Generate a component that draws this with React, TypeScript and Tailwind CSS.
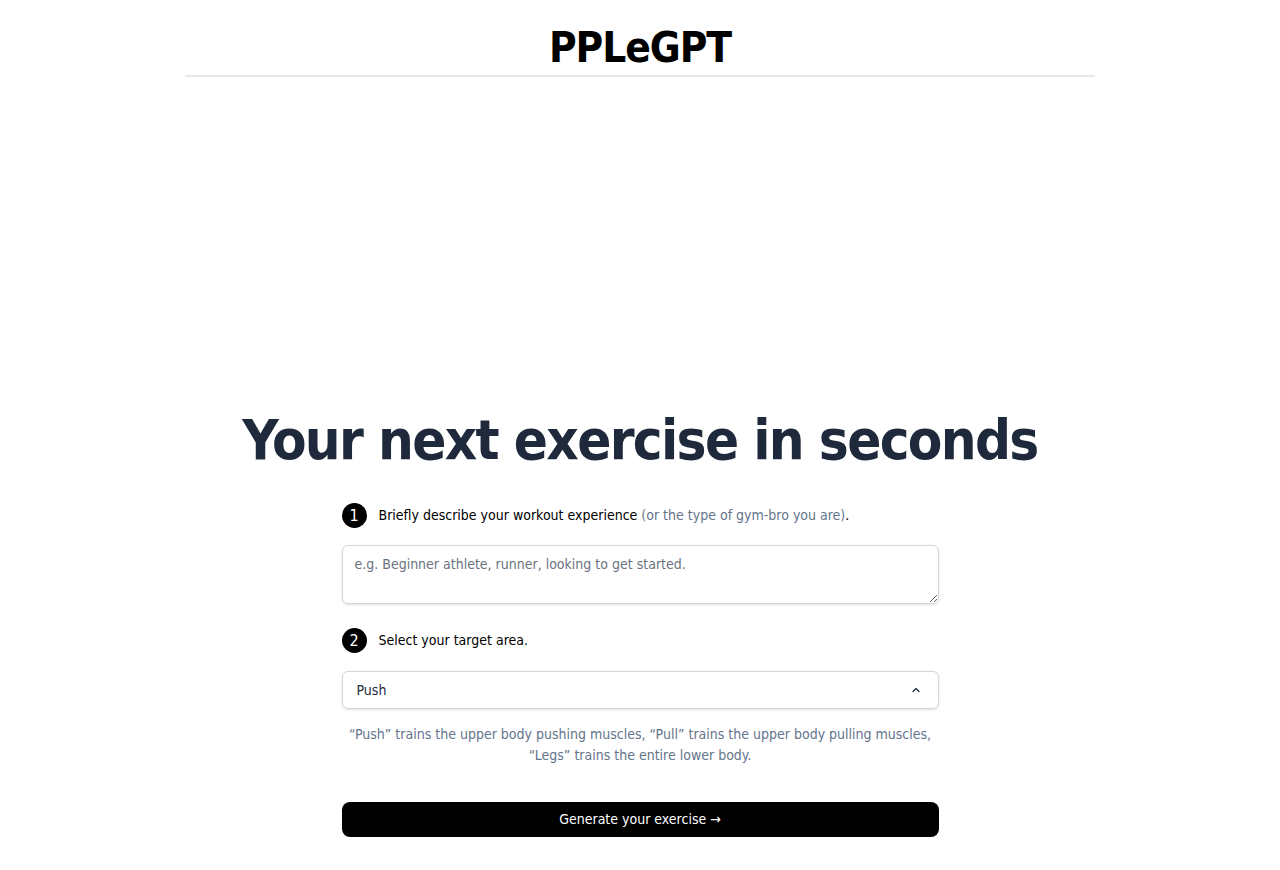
import React from "react";

export default function App() {
  const font = { fontFamily: '"DejaVu Sans Condensed", "DejaVu Sans", sans-serif' };
  return (
    <div className="min-h-screen bg-white" style={font}>
      <header className="mx-auto w-[910px] border-b-2 border-gray-200 pt-[24px] pb-[3px] flex justify-center">
        <h1 className="text-[42px] leading-[48px] font-bold text-black tracking-tight">PPLeGPT</h1>
      </header>
      <main className="flex flex-col items-center">
        <h2 className="mt-[331px] text-[56px] leading-[64px] font-bold text-[#1e293b] tracking-[-0.03em]">Your next exercise in seconds</h2>
        <div className="w-[597px] mt-[31px]">
          <div className="flex items-center gap-3">
            <span className="w-[25px] h-[25px] rounded-full bg-black text-white text-[16px] flex items-center justify-center shrink-0">1</span>
            <p className="text-[14px] text-black">
              Briefly describe your workout experience <span className="text-[#64748b]">(or the type of gym-bro you are)</span>.
            </p>
          </div>
          <textarea
            rows={2}
            placeholder="e.g. Beginner athlete, runner, looking to get started."
            className="mt-[17px] w-full h-[59px] rounded-md border border-gray-300 px-3 py-2 text-[14px] placeholder:text-[#6b7280] shadow-sm block"
          />
          <div className="flex items-center gap-3 mt-[24px]">
            <span className="w-[25px] h-[25px] rounded-full bg-black text-white text-[16px] flex items-center justify-center shrink-0">2</span>
            <p className="text-[14px] text-black">Select your target area.</p>
          </div>
          <div className="mt-[18px] h-[38px] rounded-md border border-gray-300 shadow-sm flex items-center justify-between px-[14px]">
            <span className="text-[14px] text-[#1e293b]">Push</span>
            <svg width="12" height="12" viewBox="0 0 24 24" fill="none" stroke="#1e293b" strokeWidth="2.5" strokeLinecap="round" strokeLinejoin="round" className="mr-[2px]">
              <path d="M6 15l6-6 6 6" />
            </svg>
          </div>
          <p className="mt-[15px] text-center text-[14px] leading-[21px] text-[#64748b]">
            “Push” trains the upper body pushing muscles, “Pull” trains the upper body pulling muscles, “Legs” trains the entire lower body.
          </p>
          <button className="mt-[36px] w-full h-[35px] rounded-lg bg-black text-white text-[14px]">
            Generate your exercise →
          </button>
        </div>
      </main>
    </div>
  );
}
